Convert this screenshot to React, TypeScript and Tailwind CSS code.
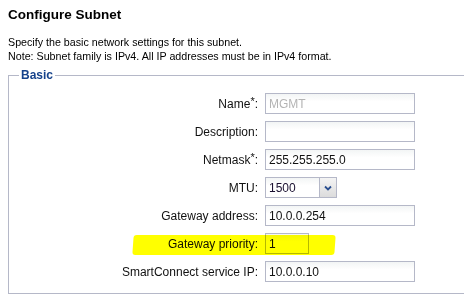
import React from "react";

const FONT = "font-['Liberation_Sans',Arial,sans-serif]";

interface FieldRow {
  label: string;
  required?: boolean;
  value?: string;
  kind?: "text" | "disabled" | "select" | "short";
}

const ROWS: FieldRow[] = [
  { label: "Name", required: true, value: "MGMT", kind: "disabled" },
  { label: "Description", value: "" },
  { label: "Netmask", required: true, value: "255.255.255.0" },
  { label: "MTU", value: "1500", kind: "select" },
  { label: "Gateway address", value: "10.0.0.254" },
  { label: "Gateway priority", value: "1", kind: "short" },
  { label: "SmartConnect service IP", value: "10.0.0.10" },
];

function TextBox({ row }: { row: FieldRow }) {
  const width = row.kind === "short" ? "w-[44px]" : "w-[150px]";
  const color = row.kind === "disabled" ? "text-[#b4b4b4]" : "text-[#111]";
  return (
    <div
      className={`${width} h-[21px] border border-[#b5b8c8] bg-gradient-to-b from-[#f3f5f5] to-white to-40% px-[3px] flex items-center text-[12px] ${color}`}
    >
      {row.value}
    </div>
  );
}

function SelectBox({ row }: { row: FieldRow }) {
  return (
    <div className="flex h-[21px] w-[72px]">
      <div className="flex-1 border border-[#b5b8c8] bg-gradient-to-b from-[#f3f5f5] to-white to-40% px-[3px] flex items-center text-[12px] text-[#1a1030]">
        {row.value}
      </div>
      <div className="w-[17px] border border-l-0 border-[#b5b8c8] bg-gradient-to-b from-[#f4f4f4] to-[#dcdcdc] flex items-center justify-center">
        <svg width="8" height="6" viewBox="0 0 8 6">
          <path d="M1 1.5 L4 4.5 L7 1.5" stroke="#2a4f8f" strokeWidth="1.8" fill="none" />
        </svg>
      </div>
    </div>
  );
}

export default function App() {
  return (
    <div className={`relative w-[464px] h-[299px] overflow-hidden bg-white text-black ${FONT}`}>
      <div className="pl-[8px] pt-[7px]">
        <h1 className="text-[13.5px] font-bold leading-[16px]">Configure Subnet</h1>
        <p className="mt-[12px] text-[10.7px] leading-[14px]">
          Specify the basic network settings for this subnet.
          <br />
          Note: Subnet family is IPv4. All IP addresses must be in IPv4 format.
        </p>
        <fieldset className="mt-[5px] w-[480px] h-[226px] border border-[#b5b8c8] pl-0">
          <legend className="ml-[10px] px-[2px] text-[12px] font-bold text-[#15428b] leading-[14px]">
            Basic
          </legend>
          <div className="mt-[11px] grid grid-cols-[249px_auto] gap-x-[7px] gap-y-[7px] items-center">
            {ROWS.map((row) => (
              <React.Fragment key={row.label}>
                <div className="text-right text-[12px] text-[#111] leading-[14px]">
                  {row.label}
                  {row.required && <sup className="text-[11px] top-[-3px]">*</sup>}:
                </div>
                <div>
                  {row.kind === "select" ? <SelectBox row={row} /> : <TextBox row={row} />}
                </div>
              </React.Fragment>
            ))}
          </div>
        </fieldset>
      </div>
      {/* marker highlight over the gateway priority row */}
      <div className="absolute left-[133px] top-[235px] w-[202px] h-[20px] bg-[#ffff00] mix-blend-multiply rounded-[3px] skew-x-[-4deg]" />
    </div>
  );
}
